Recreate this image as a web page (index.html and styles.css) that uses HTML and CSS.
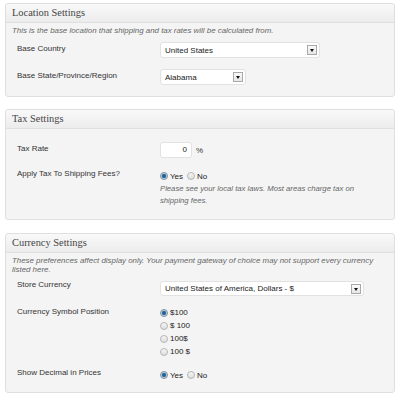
FILE: index.html
```html
<!DOCTYPE html>
<html>
<head>
<meta charset="utf-8">
<link rel="stylesheet" href="styles.css">
</head>
<body>
<div class="panel">
  <div class="panel-head"><h3>Location Settings</h3></div>
  <p class="desc">This is the base location that shipping and tax rates will be calculated from.</p>
  <div class="row r-country">
    <div class="label">Base Country</div>
    <div class="control"><div class="select w-country"><span>United States</span><i class="arrow"></i></div></div>
  </div>
  <div class="row r-state">
    <div class="label">Base State/Province/Region</div>
    <div class="control"><div class="select w-state"><span>Alabama</span><i class="arrow"></i></div></div>
  </div>
</div>

<div class="panel p-tax">
  <div class="panel-head"><h3>Tax Settings</h3></div>
  <div class="row r-rate">
    <div class="label">Tax Rate</div>
    <div class="control"><span class="input">0</span><span class="unit">%</span></div>
  </div>
  <div class="row r-apply">
    <div class="label">Apply Tax To Shipping Fees?</div>
    <div class="control radios-inline">
      <div class="radio-line"><i class="radio on"></i><span>Yes</span><i class="radio"></i><span>No</span></div>
      <p class="help">Please see your local tax laws. Most areas charge tax on shipping fees.</p>
    </div>
  </div>
</div>

<div class="panel p-cur">
  <div class="panel-head"><h3>Currency Settings</h3></div>
  <p class="desc desc-tight">These preferences affect display only. Your payment gateway of choice may not support every currency listed here.</p>
  <div class="row r-store">
    <div class="label">Store Currency</div>
    <div class="control"><div class="select w-cur"><span>United States of America, Dollars - $</span><i class="arrow"></i></div></div>
  </div>
  <div class="row r-pos">
    <div class="label">Currency Symbol Position</div>
    <div class="control stack">
      <div class="radio-line"><i class="radio on"></i><span>$100</span></div>
      <div class="radio-line"><i class="radio"></i><span>$ 100</span></div>
      <div class="radio-line"><i class="radio"></i><span>100$</span></div>
      <div class="radio-line"><i class="radio"></i><span>100 $</span></div>
    </div>
  </div>
  <div class="row r-dec">
    <div class="label">Show Decimal in Prices</div>
    <div class="control radios-inline">
      <div class="radio-line"><i class="radio on"></i><span>Yes</span><i class="radio"></i><span>No</span></div>
    </div>
  </div>
</div>
</body>
</html>
```
FILE: styles.css
```css
* { box-sizing: border-box; }
html, body { margin: 0; padding: 0; background: #fff; }
body {
  padding: 3px 5px 0;
  font-family: "Liberation Sans", Arial, sans-serif;
  font-size: 8px;
  color: #333;
}
.panel {
  background: #f4f4f4;
  border: 1px solid #dfdfdf;
  border-radius: 3px;
  padding-bottom: 11px;
}
.p-tax { margin-top: 12px; padding-bottom: 12px; }
.p-cur { margin-top: 13px; padding-bottom: 10px; }
.panel-head {
  height: 19px;
  background: linear-gradient(#f9f9f9, #ececec);
  border-bottom: 1px solid #dfdfdf;
  border-radius: 3px 3px 0 0;
  padding-left: 6px;
}
.panel-head h3 {
  margin: 0;
  font-family: "Liberation Serif", "Times New Roman", serif;
  font-weight: normal;
  font-size: 10.4px;
  line-height: 18px;
  color: #464646;
}
.desc {
  margin: 3px 16px 0 6px;
  font-style: italic;
  font-size: 7.9px;
  line-height: 9px;
  color: #666;
}
.desc-tight { margin-top: 4px; line-height: 8.6px; }
.row { display: flex; align-items: flex-start; }
.label {
  width: 154px;
  flex: none;
  padding-left: 11px;
  line-height: 14px;
}
.control { flex: 1; display: flex; align-items: center; }
.r-country { margin-top: 7px; }
.r-state { margin-top: 11px; }
.r-rate { margin-top: 13px; }
.r-apply { margin-top: 9px; }
.r-store { margin-top: 7px; }
.r-store .label { line-height: 8px; }
.r-pos { margin-top: 9px; }
.r-dec { margin-top: 8px; }
.select {
  height: 16px;
  background: #fff;
  border: 1px solid #e2e2e2;
  border-radius: 3px;
  display: flex;
  align-items: center;
  justify-content: space-between;
  padding: 0 2px 0 4px;
  color: #222;
}
.w-country { width: 160px; }
.w-state { width: 86px; }
.w-cur { width: 204px; height: 15px; }
.arrow {
  width: 10px;
  height: 10px;
  border: 1px solid #a9a9a9;
  background: linear-gradient(#fafafa, #e6e6e6);
  position: relative;
}
.arrow::after {
  content: "";
  position: absolute;
  left: 1.5px;
  top: 3px;
  border-left: 2.5px solid transparent;
  border-right: 2.5px solid transparent;
  border-top: 3px solid #111;
}
.input {
  width: 32px;
  height: 16px;
  background: #fff;
  border: 1px solid #e2e2e2;
  border-radius: 3px;
  text-align: right;
  padding-right: 4px;
  line-height: 14px;
  color: #222;
}
.unit { margin-left: 4px; }
.radios-inline { display: block; padding-top: 2px; }
.stack { display: block; padding-top: 1px; }
.radio-line {
  display: flex;
  align-items: center;
  height: 14px;
  color: #222;
}
.stack .radio-line { height: 13px; }
.radio {
  width: 8px;
  height: 8px;
  border-radius: 50%;
  border: 1px solid #b5b5b5;
  background: linear-gradient(#f6f6f6, #dedede);
  margin: 0 2px 0 0;
  flex: none;
}
.radio.on {
  border-color: #7c8f9e;
  background: radial-gradient(circle, #1f5f91 0, #2b6ca0 1.8px, #c9d5df 2.6px, #e4e9ee 4px);
}
.radio-line span + .radio { margin-left: 4px; }
.help {
  margin: 0;
  font-style: italic;
  font-size: 7.7px;
  line-height: 12px;
  color: #666;
  width: 205px;
}
```
